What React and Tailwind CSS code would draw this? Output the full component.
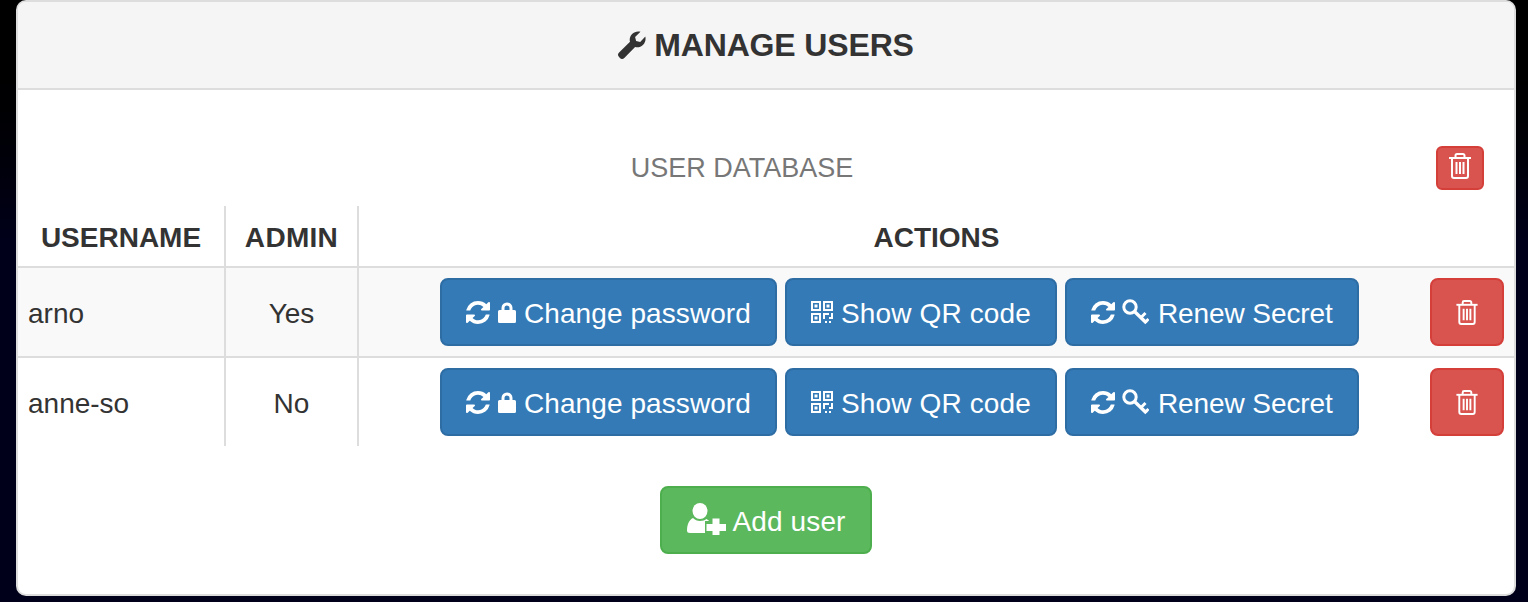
import React from "react";

function Sync({ className }) {
  return (
    <svg viewBox="128 128 1536 1536" className={className} fill="currentColor" preserveAspectRatio="none">
      <path d="M1639 1056q0 5-1 7-64 268-268 434.500t-478 166.500q-146 0-282.500-55t-243.500-157l-129 129q-19 19-45 19t-45-19-19-45v-448q0-26 19-45t45-19h448q26 0 45 19t19 45-19 45l-137 137q71 66 161 102t187 36q134 0 250-65t186-179q11-17 53-117 8-23 30-23h192q13 0 22.500 9.500t9.500 22.500zm25-800v448q0 26-19 45t-45 19h-448q-26 0-45-19t-19-45 19-45l138-138q-148-137-349-137-134 0-250 65t-186 179q-11 17-53 117-8 23-30 23h-199q-13 0-22.500-9.500t-9.500-22.500v-7q65-268 270-434.500t480-166.500q146 0 284 55.500t245 156.500l130-129q19-19 45-19t45 19 19 45z" />
    </svg>
  );
}

function Trash({ className }) {
  return (
    <svg viewBox="0 0 22 26" className={className} fill="none" stroke="currentColor">
      <path d="M0 5h22" strokeWidth="2" />
      <path d="M6.500 5V2.500A1.500 1.500 0 0 1 8 1h6a1.500 1.500 0 0 1 1.500 1.500V5" strokeWidth="2" />
      <path d="M3 5v18a2 2 0 0 0 2 2h12a2 2 0 0 0 2-2V5" strokeWidth="2" />
      <path d="M7.500 9v12M11 9v12M14.500 9v12" strokeWidth="2" />
    </svg>
  );
}

function Wrench({ className }) {
  return (
    <svg viewBox="0 0 28 28" className={className} fill="currentColor">
      <path d="M27.300 5.500c.8 3.200-.1 6.300-2.400 8.500-2.100 2-5 2.800-7.800 2L6.300 26.900a3.100 3.100 0 0 1-4.400 0L1.100 26a3.100 3.100 0 0 1 0-4.400L12 10.800c-.8-2.800 0-5.800 2.100-7.900C16.300.7 19.400-.1 22.500.7l-5.400 5.200 1 4.100 4.100 1z" />
    </svg>
  );
}

function LockIcon({ className }) {
  return (
    <svg viewBox="0 0 18 21" className={className} fill="currentColor">
      <path fillRule="evenodd" d="M3.500 8V6a5.500 5.500 0 0 1 11 0v2h2A1.500 1.500 0 0 1 18 9.500v10a1.500 1.500 0 0 1-1.500 1.500h-15A1.500 1.500 0 0 1 0 19.500v-10A1.500 1.500 0 0 1 1.500 8zm3 0h5V6a2.500 2.500 0 0 0-5 0z" />
    </svg>
  );
}

function QrIcon({ className }) {
  return (
    <svg viewBox="0 0 22 22" className={className} fill="currentColor">
      <path fillRule="evenodd" d="M0 0h10v10H0zm2 2v6h6V2zM12 0h10v10H12zm2 2v6h6V2zM0 12h10v10H0zm2 2v6h6v-6z" />
      <path d="M3.500 3.500h3v3h-3zM15.500 3.500h3v3h-3zM3.500 15.500h3v3h-3zM12 12h6v2h-4v4h-2zM20 12h2v6h-4v-2h2zM14 20h2v2h-2zM18 20h2v2h-2z" />
    </svg>
  );
}

function KeyIcon({ className }) {
  return (
    <svg viewBox="0 0 27 26" className={className} fill="none" stroke="currentColor">
      <circle cx="8" cy="8" r="6.200" strokeWidth="3" />
      <path d="M12.500 12.500 L24.500 24" strokeWidth="3.400" />
      <path d="M19 18.500l4.500-4.500M23.500 23l3-3" strokeWidth="3" />
    </svg>
  );
}

function UserAdd({ className }) {
  return (
    <svg viewBox="0 0 40 32" className={className} fill="currentColor">
      <ellipse cx="14" cy="8" rx="7.500" ry="8" />
      <path d="M1 27.500c0-6 2-10.500 6-12.500 2 2 4 3 7 3s5-1 6.500-2c1 .5 2 1.200 2.700 2H19v12H4c-2 0-3-.8-3-2.500z" />
      <path d="M26.500 15.500h7V21H40v7h-6.500v4h-7v-4H20.500v-7h6z" />
    </svg>
  );
}

function Btn({ className, children }) {
  return (
    <button className={`inline-flex items-center h-[68px] rounded-[8px] border-2 text-[28px] text-white whitespace-nowrap ${className}`}>
      {children}
    </button>
  );
}

function Actions() {
  return (
    <div className="flex items-center">
      <div className="flex-1 flex justify-center gap-2 pl-[81px]">
        <Btn className="w-[337px] bg-[#337ab7] border-[#2e6da4] pl-[24px]">
          <Sync className="w-[24px] h-[23px]" />
          <LockIcon className="w-[18px] h-[21px] ml-[8px]" />
          <span className="ml-[8px] pt-[4px] tracking-[0.08px]">Change password</span>
        </Btn>
        <Btn className="w-[272px] bg-[#337ab7] border-[#2e6da4] pl-[24px]">
          <QrIcon className="w-[22px] h-[22px]" />
          <span className="ml-[8px] pt-[4px] tracking-[0.13px]">Show QR code</span>
        </Btn>
        <Btn className="w-[294px] bg-[#337ab7] border-[#2e6da4] pl-[24px]">
          <Sync className="w-[24px] h-[23px]" />
          <KeyIcon className="w-[27px] h-[26px] ml-[7px]" />
          <span className="ml-[9px] pt-[4px] tracking-[-0.1px]">Renew Secret</span>
        </Btn>
      </div>
      <Btn className="w-[74px] ml-[71px] mr-[10px] justify-center bg-[#d9534f] border-[#d43f3a]">
        <Trash className="w-[22px] h-[25px] mt-[1px]" />
      </Btn>
    </div>
  );
}

export default function App() {
  return (
    <div className="h-[602px] bg-gradient-to-b from-[#000000] to-[#00001a] to-40% pl-[16px] pr-[12px] font-['Liberation_Sans',Arial,sans-serif] text-[28px] text-[#333]">
      <div className="h-[596px] bg-white border-2 border-[#ddd] rounded-[10px] overflow-hidden">
        <div className="h-[88px] bg-[#f5f5f5] border-b-2 border-[#ddd] flex items-center justify-center">
          <Wrench className="w-[28px] h-[28px] mr-[8px]" />
          <h1 className="text-[32px] font-bold tracking-[-0.15px]">MANAGE USERS</h1>
        </div>
        <div className="relative h-[116px] flex items-center justify-center pt-[40px] pr-[48px] text-[27px] text-[#777]">
          USER DATABASE
          <button className="absolute right-[30px] top-[56px] w-[48px] h-[44px] flex items-center justify-center rounded-[6px] bg-[#d9534f] border-2 border-[#d43f3a] text-white">
            <Trash className="w-[22px] h-[26px] mb-[4px]" />
          </button>
        </div>
        <table className="w-full border-separate border-spacing-0 table-fixed">
          <colgroup>
            <col className="w-[206px]" />
            <col className="w-[133px]" />
            <col />
          </colgroup>
          <thead>
            <tr>
              <th className="h-[62px] pt-[4px] border-b-2 border-[#ddd] font-bold text-center">USERNAME</th>
              <th className="pt-[4px] border-l-2 border-b-2 border-[#ddd] font-bold text-center tracking-[0.3px]">ADMIN</th>
              <th className="pt-[4px] border-l-2 border-b-2 border-[#ddd] font-bold text-center">ACTIONS</th>
            </tr>
          </thead>
          <tbody>
            <tr className="bg-[#f9f9f9]">
              <td className="h-[90px] pl-[10px] pt-[4px] align-middle border-b-2 border-[#ddd]">arno</td>
              <td className="pt-[4px] text-center align-middle border-l-2 border-b-2 border-[#ddd]">Yes</td>
              <td className="align-middle border-l-2 border-b-2 border-[#ddd] p-0"><Actions /></td>
            </tr>
            <tr className="bg-white">
              <td className="h-[88px] pl-[10px] pt-[4px] align-middle">anne-so</td>
              <td className="pt-[4px] text-center align-middle border-l-2 border-[#ddd]">No</td>
              <td className="align-middle border-l-2 border-[#ddd] p-0"><Actions /></td>
            </tr>
          </tbody>
        </table>
        <div className="flex justify-center pt-[40px]">
          <Btn className="w-[212px] justify-center bg-[#5cb85c] border-[#4cae4c]">
            <UserAdd className="w-[40px] h-[32px] mr-[6px] mb-[2px]" />
            <span className="pt-[4px] tracking-[0.13px]">Add user</span>
          </Btn>
        </div>
      </div>
    </div>
  );
}
